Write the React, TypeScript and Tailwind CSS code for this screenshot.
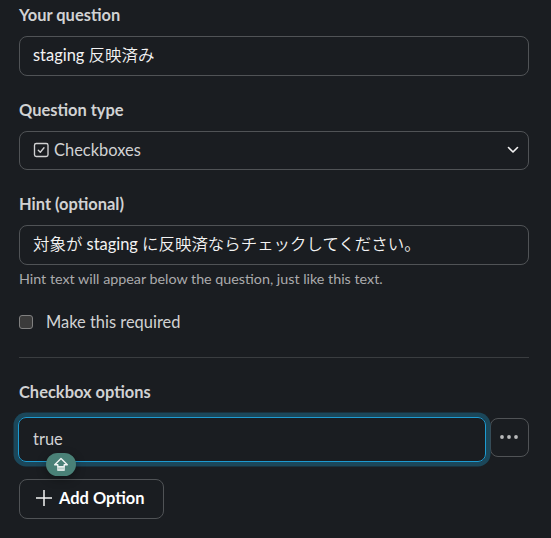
import { useState } from "react";

function CheckboxIcon() {
  return (
    <svg className="mb-px" width="16" height="16" viewBox="0 0 16 16" fill="none" stroke="#d1d2d3">
      <rect x="1.500" y="1.500" width="13.500" height="13" rx="1.8" strokeWidth="1.35" />
      <path d="M5.300 8.300l2 2L11 5.800" strokeWidth="1.35" strokeLinecap="round" strokeLinejoin="round" />
    </svg>
  );
}

function CapsLockBadge() {
  return (
    <span className="absolute left-[27px] top-[35px] flex h-[23px] w-[30px] items-center justify-center rounded-full bg-[#4a8177] shadow-[0_3px_10px_rgba(0,0,0,0.35)]">
      <svg width="16" height="15" viewBox="0 0 16 15" fill="none">
        <path
          d="M8 1.500L1.700 7.800h3.100v2h6.400v-2h3.100z"
          stroke="#f1f5f4"
          strokeWidth="1.4"
          strokeLinejoin="round"
        />
        <path d="M4.100 9.700h7.800v3.500a.8.8 0 0 1-.8.8H4.900a.8.8 0 0 1-.8-.8z" fill="#d5e2df" />
        <path d="M4.800 11.400h6.400" stroke="#a9c5bf" strokeWidth="0.8" />
      </svg>
    </span>
  );
}

export default function App() {
  const [question, setQuestion] = useState("staging 反映済み");
  const [hint, setHint] = useState("対象が staging に反映済ならチェックしてください。");
  const [option, setOption] = useState("true");
  const [required, setRequired] = useState(false);

  return (
    <div className="h-[538px] w-[551px] overflow-hidden bg-[#1a1d21] pl-[19px] pr-[22px] pt-[3px] font-['Lato','Noto_Sans_CJK_JP_DemiLight','Noto_Sans_CJK_JP',sans-serif] text-[16.45px] leading-6 text-[#d1d2d3]">
      {/* Question */}
      <label className="block font-bold">Your question</label>
      <input
        className="mt-[9px] block h-10 w-full rounded-lg border border-[#505356] px-[13px] pb-[4px] text-[#f3f3f3] outline-none"
        value={question}
        onChange={(e) => setQuestion(e.target.value)}
      />

      {/* Type */}
      <label className="mt-[22px] block font-bold">Question type</label>
      <button className="mt-[9px] flex h-[39px] w-full items-center rounded-lg border border-[#505356] pl-[13px] pr-[9px]">
        <CheckboxIcon />
        <span className="mb-0.5 ml-[5px]">Checkboxes</span>
        <svg className="mb-px ml-auto" width="12" height="8" viewBox="0 0 12 8" fill="none">
          <path
            d="M1.500 1.500L6 6l4.500-4.500"
            stroke="#f3f3f3"
            strokeWidth="1.6"
            strokeLinecap="round"
            strokeLinejoin="round"
          />
        </svg>
      </button>

      {/* Hint */}
      <label className="mt-[22px] block font-bold">Hint (optional)</label>
      <input
        className="mt-[9px] block h-10 w-full rounded-lg border border-[#505356] px-[13px] pb-[4px] text-[#f3f3f3] outline-none"
        value={hint}
        onChange={(e) => setHint(e.target.value)}
      />
      <p className="mt-1 text-[14.3px] leading-5 text-[#ababad]">
        Hint text will appear below the question, just like this text.
      </p>

      <label className="mt-[21px] flex items-center">
        <input
          type="checkbox"
          className="mb-px size-[14px] appearance-none rounded-[3px] border border-[#808080] bg-[#3b3b3b]"
          checked={required}
          onChange={(e) => setRequired(e.target.checked)}
        />
        <span className="ml-[13px]">Make this required</span>
      </label>

      <hr className="mt-[23px] border-[#3a3d40]" />

      {/* Options */}
      <label className="mt-[22px] block font-bold">Checkbox options</label>
      <div className="mt-[13px] flex items-start gap-1">
        <div className="relative -ml-px w-[468px]">
          <input
            className="block h-[45px] w-full rounded-lg border border-[#1d9bd1] px-[14px] pb-px text-[#d1d2d3] shadow-[0_0_0_4.5px_#1b475a] outline-none"
            value={option}
            onChange={(e) => setOption(e.target.value)}
          />
          <div className="absolute left-px top-px">
            <CapsLockBadge />
          </div>
        </div>
        <button className="mt-px flex h-[39px] flex-1 items-center justify-center rounded-lg border border-[#505356]">
          <svg className="mb-px mr-px" width="20" height="6" viewBox="0 0 20 6" fill="#b9babb">
            <circle cx="3" cy="3" r="1.9" />
            <circle cx="10" cy="3" r="1.9" />
            <circle cx="17" cy="3" r="1.9" />
          </svg>
        </button>
      </div>

      <button className="mt-[17px] flex h-10 w-[145px] items-center rounded-lg border border-[#505356] pl-4 font-bold text-white">
        <svg className="mb-0.5" width="16" height="16" viewBox="0 0 16 16" stroke="#f3f3f3" strokeWidth="1.500">
          <path d="M8 0v16M0 8h16" />
        </svg>
        <span className="mb-0.5 ml-[7px]">Add Option</span>
      </button>
    </div>
  );
}
